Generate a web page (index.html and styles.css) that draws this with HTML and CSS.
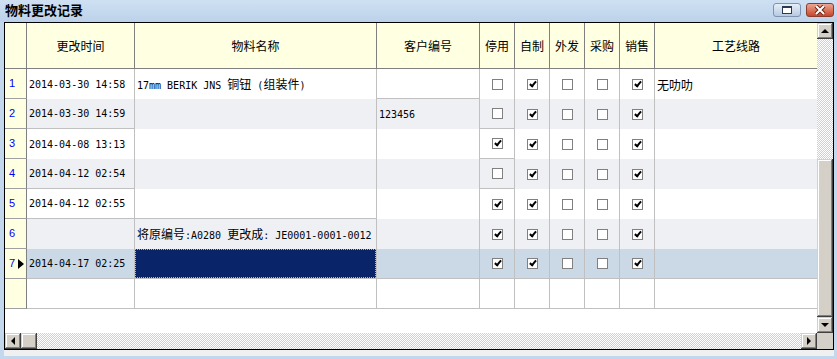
FILE: index.html
```html
<!DOCTYPE html>
<html lang="zh-CN">
<head>
    <meta charset="UTF-8">
    <title>物料更改记录</title>
    <link rel="stylesheet" href="styles.css">
</head>
<body>
    <div class="window">
        <div class="titlebar">
            <span class="title">物料更改记录</span>
            <div class="title-btns">
                <span class="tbtn restore">
                    <svg width="10" height="8" viewBox="0 0 10 8"><rect x="0.5" y="0.5" width="9" height="7" fill="#fff" stroke="#2b3a52"/><rect x="0" y="0" width="10" height="2" fill="#2b3a52"/></svg>
                </span>
                <span class="tbtn close">
                    <svg width="12" height="10" viewBox="0 0 12 10"><path d="M2 1 L10 9 M10 1 L2 9" stroke="#6b2414" stroke-width="4"/><path d="M2 1 L10 9 M10 1 L2 9" stroke="#fff" stroke-width="2"/></svg>
                </span>
            </div>
        </div>

        <div class="panel">
            <div class="grid-area">
                <div class="grid">
                    <div class="row head">
                        <div class="cell c-ind"></div>
                        <div class="cell c-time">更改时间</div>
                        <div class="cell c-name">物料名称</div>
                        <div class="cell c-code">客户编号</div>
                        <div class="cell c-chk">停用</div>
                        <div class="cell c-chk">自制</div>
                        <div class="cell c-chk">外发</div>
                        <div class="cell c-chk">采购</div>
                        <div class="cell c-chk">销售</div>
                        <div class="cell c-route">工艺线路</div>
                    </div>

                    <div class="row">
                        <div class="cell c-ind hl"><span class="num">1</span></div>
                        <div class="cell c-time">2014-03-30 14:58</div>
                        <div class="cell c-name"><span class="txt">17mm BERIK JNS <span class="cn">铜钮</span> (<span class="cn">组装件</span>)</span></div>
                        <div class="cell c-code hl"></div>
                        <div class="cell c-chk"><span class="box"></span></div>
                        <div class="cell c-chk"><span class="box on"></span></div>
                        <div class="cell c-chk"><span class="box"></span></div>
                        <div class="cell c-chk"><span class="box"></span></div>
                        <div class="cell c-chk"><span class="box on"></span></div>
                        <div class="cell c-route"><span class="cn">无叻叻</span></div>
                    </div>

                    <div class="row alt">
                        <div class="cell c-ind hl"><span class="num">2</span></div>
                        <div class="cell c-time hl">2014-03-30 14:59</div>
                        <div class="cell c-name"></div>
                        <div class="cell c-code">123456</div>
                        <div class="cell c-chk hl"><span class="box"></span></div>
                        <div class="cell c-chk"><span class="box on"></span></div>
                        <div class="cell c-chk"><span class="box"></span></div>
                        <div class="cell c-chk"><span class="box"></span></div>
                        <div class="cell c-chk"><span class="box on"></span></div>
                        <div class="cell c-route"></div>
                    </div>

                    <div class="row">
                        <div class="cell c-ind hl"><span class="num">3</span></div>
                        <div class="cell c-time">2014-04-08 13:13</div>
                        <div class="cell c-name"></div>
                        <div class="cell c-code"></div>
                        <div class="cell c-chk hl"><span class="box on"></span></div>
                        <div class="cell c-chk"><span class="box on"></span></div>
                        <div class="cell c-chk"><span class="box"></span></div>
                        <div class="cell c-chk"><span class="box"></span></div>
                        <div class="cell c-chk"><span class="box on"></span></div>
                        <div class="cell c-route"></div>
                    </div>

                    <div class="row alt">
                        <div class="cell c-ind hl"><span class="num">4</span></div>
                        <div class="cell c-time hl">2014-04-12 02:54</div>
                        <div class="cell c-name"></div>
                        <div class="cell c-code"></div>
                        <div class="cell c-chk hl"><span class="box"></span></div>
                        <div class="cell c-chk"><span class="box on"></span></div>
                        <div class="cell c-chk"><span class="box"></span></div>
                        <div class="cell c-chk"><span class="box"></span></div>
                        <div class="cell c-chk"><span class="box on"></span></div>
                        <div class="cell c-route"></div>
                    </div>

                    <div class="row">
                        <div class="cell c-ind hl"><span class="num">5</span></div>
                        <div class="cell c-time hl">2014-04-12 02:55</div>
                        <div class="cell c-name hl"></div>
                        <div class="cell c-code"></div>
                        <div class="cell c-chk"><span class="box on"></span></div>
                        <div class="cell c-chk"><span class="box on"></span></div>
                        <div class="cell c-chk"><span class="box"></span></div>
                        <div class="cell c-chk"><span class="box"></span></div>
                        <div class="cell c-chk"><span class="box on"></span></div>
                        <div class="cell c-route"></div>
                    </div>

                    <div class="row alt">
                        <div class="cell c-ind hl"><span class="num">6</span></div>
                        <div class="cell c-time"></div>
                        <div class="cell c-name"><span class="txt"><span class="cn">将原编号</span>:A0280 <span class="cn">更改成</span>: JE0001-0001-0012</span></div>
                        <div class="cell c-code"></div>
                        <div class="cell c-chk"><span class="box on"></span></div>
                        <div class="cell c-chk"><span class="box on"></span></div>
                        <div class="cell c-chk"><span class="box"></span></div>
                        <div class="cell c-chk"><span class="box"></span></div>
                        <div class="cell c-chk"><span class="box on"></span></div>
                        <div class="cell c-route"></div>
                    </div>

                    <div class="row sel">
                        <div class="cell c-ind hl"><span class="num">7</span><span class="pointer"></span></div>
                        <div class="cell c-time hl">2014-04-17 02:25</div>
                        <div class="cell c-name hl"><span class="focus"></span></div>
                        <div class="cell c-code hl"></div>
                        <div class="cell c-chk hl"><span class="box on"></span></div>
                        <div class="cell c-chk hl"><span class="box on"></span></div>
                        <div class="cell c-chk hl"><span class="box"></span></div>
                        <div class="cell c-chk hl"><span class="box"></span></div>
                        <div class="cell c-chk hl"><span class="box on"></span></div>
                        <div class="cell c-route hl"></div>
                    </div>

                    <div class="row">
                        <div class="cell c-ind hl"></div>
                        <div class="cell c-time hl"></div>
                        <div class="cell c-name hl"></div>
                        <div class="cell c-code hl"></div>
                        <div class="cell c-chk hl"></div>
                        <div class="cell c-chk hl"></div>
                        <div class="cell c-chk hl"></div>
                        <div class="cell c-chk hl"></div>
                        <div class="cell c-chk hl"></div>
                        <div class="cell c-route hl"></div>
                    </div>
                </div>

                <div class="vscroll">
                    <div class="sb-btn"><span class="arrow up"></span></div>
                    <div class="track"></div>
                    <div class="sb-btn thumb"></div>
                    <div class="sb-btn"><span class="arrow down"></span></div>
                </div>
            </div>

            <div class="hscroll-row">
                <div class="hscroll">
                    <div class="sb-btn"><span class="arrow left"></span></div>
                    <div class="sb-btn thumb"></div>
                    <div class="track"></div>
                    <div class="sb-btn"><span class="arrow right"></span></div>
                </div>
                <div class="corner"></div>
            </div>
        </div>
        <div class="statusline"></div>
    </div>
</body>
</html>
```

FILE: styles.css
```css
body {
    margin: 0;
    background-color: #c4d8ed;
    font-family: "DejaVu Sans Mono", "Noto Sans CJK SC", monospace;
    font-size: 10px;
    color: #000;
}
.window {
    width: 837px;
    height: 359px;
    overflow: hidden;
}
.titlebar {
    height: 22px;
    display: flex;
    justify-content: space-between;
    background: linear-gradient(#cfe0f2, #bcd2ea);
}
.title {
    font-family: "Noto Sans CJK SC", sans-serif;
    font-weight: bold;
    font-size: 13px;
    line-height: 20px;
    padding-left: 5px;
}
.title-btns {
    display: flex;
    gap: 5px;
    padding: 3px 3px 0 0;
}
.tbtn {
    width: 28px;
    height: 14px;
    box-sizing: border-box;
    border-radius: 3px;
    display: flex;
    align-items: center;
    justify-content: center;
}
.restore {
    background: linear-gradient(#e6eef8, #b7cae2);
    border: 1px solid #7d93b0;
}
.close {
    background: linear-gradient(#eda792, #c6462b);
    border: 1px solid #8d3b2a;
}

/* grid frame */
.panel {
    margin-left: 4px;
    width: 830px;
    height: 328px;
    box-sizing: border-box;
    border: 1px solid #000;
    background-color: #fff;
}
.grid-area {
    display: flex;
    height: 310px;
}
.grid {
    width: 812px;
}
.row {
    display: flex;
    height: 30px;
}
.row.alt {
    background-color: #eff0f4;
}
.row.sel {
    background-color: #cbd8e5;
}
.cell {
    box-sizing: border-box;
    border-right: 1px solid #c0c0c0;
    display: flex;
    align-items: center;
    padding-left: 2px;
    line-height: 13px;
    white-space: pre;
    overflow: hidden;
}
.cell.hl {
    border-bottom: 1px solid #c0c0c0;
}
.head {
    height: 46px;
    background-color: #ffffe1;
}
.head .cell {
    border-right-color: #808080;
    border-bottom: 1px solid #808080;
    justify-content: center;
    padding-left: 0;
    font-family: "Noto Sans CJK SC", sans-serif;
    font-size: 12px;
}
.txt {
    white-space: pre;
}
.cn {
    font-family: "Noto Sans CJK SC", sans-serif;
    font-size: 12px;
    line-height: 13px;
}
.c-ind {
    width: 22px;
    padding-left: 4px;
    background-color: #ffffe1;
    border-right-color: #808080;
}
.c-ind.hl {
    border-bottom-color: #a0a0a0;
}
.c-time { width: 108px; }
.c-name { width: 242px; }
.c-code { width: 103px; }
.c-chk {
    width: 35px;
    padding-left: 0;
    justify-content: center;
}
.c-route {
    width: 162px;
    border-right: none;
}
.num {
    font-family: "Liberation Sans", sans-serif;
    font-size: 11px;
    color: #0000ff;
}
.pointer {
    margin-left: 3px;
    border-top: 5px solid transparent;
    border-bottom: 5px solid transparent;
    border-left: 6px solid #000;
}
.focus {
    margin-left: -2px;
    width: 241px;
    height: 29px;
    box-sizing: border-box;
    background-color: #0a246a;
    border: 1px dotted #c9b877;
}

/* checkboxes */
.box {
    position: relative;
    width: 11px;
    height: 11px;
    box-sizing: border-box;
    border: 1px solid #808080;
    background-color: #fff;
}
.box.on::after {
    content: "";
    position: absolute;
    left: 3px;
    top: 0;
    width: 2px;
    height: 5px;
    border-right: 2px solid #000;
    border-bottom: 2px solid #000;
    transform: rotate(40deg);
}

/* scrollbars */
.vscroll {
    width: 16px;
    display: flex;
    flex-direction: column;
}
.sb-btn {
    width: 16px;
    height: 16px;
    box-sizing: border-box;
    background-color: #d4d0c8;
    box-shadow: inset -1px -1px #404040, inset 1px 1px #d4d0c8, inset -2px -2px #808080, inset 2px 2px #fff;
    display: flex;
    align-items: center;
    justify-content: center;
}
.track {
    background: repeating-conic-gradient(#d4d0c8 0 25%, #fff 0 50%) 0 0 / 2px 2px;
}
.vscroll .track {
    height: 120px;
}
.vscroll .thumb {
    height: 158px;
}
.hscroll-row {
    display: flex;
    height: 16px;
}
.hscroll {
    display: flex;
    width: 812px;
}
.hscroll .track {
    flex: 1;
}
.corner {
    width: 16px;
    background-color: #d4d0c8;
}
.arrow {
    width: 0;
    height: 0;
}
.arrow.up {
    border-left: 4px solid transparent;
    border-right: 4px solid transparent;
    border-bottom: 4px solid #000;
}
.arrow.down {
    border-left: 4px solid transparent;
    border-right: 4px solid transparent;
    border-top: 4px solid #000;
}
.arrow.left {
    border-top: 4px solid transparent;
    border-bottom: 4px solid transparent;
    border-right: 4px solid #000;
}
.arrow.right {
    border-top: 4px solid transparent;
    border-bottom: 4px solid transparent;
    border-left: 4px solid #000;
}
.statusline {
    margin-left: 4px;
    width: 830px;
    height: 6px;
    background-color: #f0f0f0;
}
```
